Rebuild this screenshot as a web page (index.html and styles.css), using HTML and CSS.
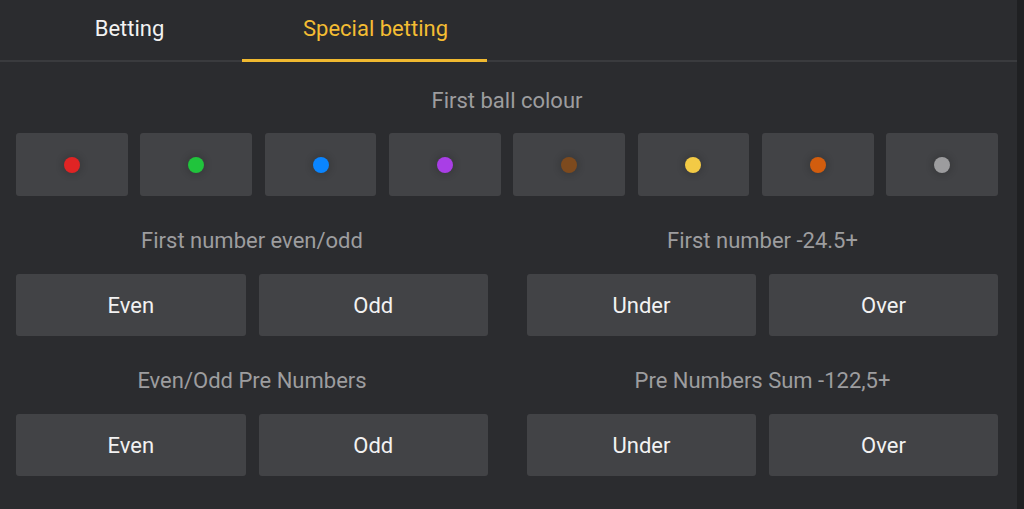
FILE: index.html
```html
<!DOCTYPE html>
<html>
<head>
<meta charset="utf-8">
<link rel="stylesheet" href="styles.css">
</head>
<body>
<div class="page">
  <div class="panel">
    <div class="tabs">
      <div class="tab tab-betting">Betting</div>
      <div class="tab tab-special active">Special betting</div>
    </div>
    <div class="content">
      <div class="label label-first">First ball colour</div>
      <div class="colours">
        <div class="cbox"><span class="dot red"></span></div>
        <div class="cbox"><span class="dot green"></span></div>
        <div class="cbox"><span class="dot blue"></span></div>
        <div class="cbox"><span class="dot purple"></span></div>
        <div class="cbox"><span class="dot brown"></span></div>
        <div class="cbox"><span class="dot yellow"></span></div>
        <div class="cbox"><span class="dot orange"></span></div>
        <div class="cbox"><span class="dot grey"></span></div>
      </div>
      <div class="grid">
        <div class="group">
          <div class="label">First number even/odd</div>
          <div class="btns"><div class="btn">Even</div><div class="btn">Odd</div></div>
        </div>
        <div class="group">
          <div class="label">First number -24.5+</div>
          <div class="btns"><div class="btn">Under</div><div class="btn">Over</div></div>
        </div>
        <div class="group">
          <div class="label">Even/Odd Pre Numbers</div>
          <div class="btns"><div class="btn">Even</div><div class="btn">Odd</div></div>
        </div>
        <div class="group">
          <div class="label">Pre Numbers Sum -122,5+</div>
          <div class="btns"><div class="btn">Under</div><div class="btn">Over</div></div>
        </div>
      </div>
    </div>
  </div>
  <div class="strip"></div>
</div>
</body>
</html>
```
FILE: styles.css
```css
html, body {
  margin: 0;
  padding: 0;
  background: #2a2b2e;
  font-family: Roboto, "Noto Sans", "Liberation Sans", sans-serif;
}
.page {
  display: flex;
  width: 1024px;
  height: 509px;
  overflow: hidden;
}
.panel {
  width: 1017px;
  background: #2b2c2f;
}
.strip {
  flex: 1;
  background: #1f2022;
}
.tabs {
  display: flex;
  height: 60px;
  border-bottom: 2px solid #3a3b3e;
  padding-left: 17px;
}
.tab {
  position: relative;
  display: flex;
  align-items: center;
  justify-content: center;
  font-size: 22px;
  color: #f2f2f2;
  padding-bottom: 4px;
  box-sizing: border-box;
}
.tab-betting { width: 225px; }
.tab-special { width: 245px; padding-left: 22px; }
.tab.active { color: #f4bd33; }
.tab.active::after {
  content: "";
  position: absolute;
  left: 0;
  right: 0;
  bottom: -2px;
  height: 3px;
  background: #f0b930;
}
.content {
  padding: 28px 19px 0 16px;
}
.label {
  text-align: center;
  font-size: 22px;
  line-height: 22px;
  color: #9d9d9f;
}
.colours {
  display: grid;
  grid-template-columns: repeat(8, 1fr);
  gap: 12.5px;
  margin-top: 21px;
}
.cbox {
  height: 63px;
  background: #424346;
  border-radius: 3px;
  display: flex;
  align-items: center;
  justify-content: center;
}
.dot {
  width: 16px;
  height: 16px;
  border-radius: 50%;
  box-shadow: 0 0 6px 3px rgba(0, 0, 0, 0.12);
}
.red { background: #e02424; }
.green { background: #20c43c; }
.blue { background: #0a85ff; }
.purple { background: #a93ee6; }
.brown { background: #7d4a1e; }
.yellow { background: #f3ca45; }
.orange { background: #d25d0e; }
.grey { background: #9c9c9e; }
.grid {
  display: grid;
  grid-template-columns: 472px 471px;
  column-gap: 39px;
  row-gap: 34px;
  margin-top: 34px;
}
.btns {
  display: grid;
  grid-template-columns: 1fr 1fr;
  gap: 13px;
  margin-top: 22px;
}
.btn {
  height: 62px;
  background: #424346;
  border-radius: 3px;
  display: flex;
  align-items: center;
  justify-content: center;
  color: #f2f2f2;
  font-size: 22px;
  font-weight: 400;
}
```
